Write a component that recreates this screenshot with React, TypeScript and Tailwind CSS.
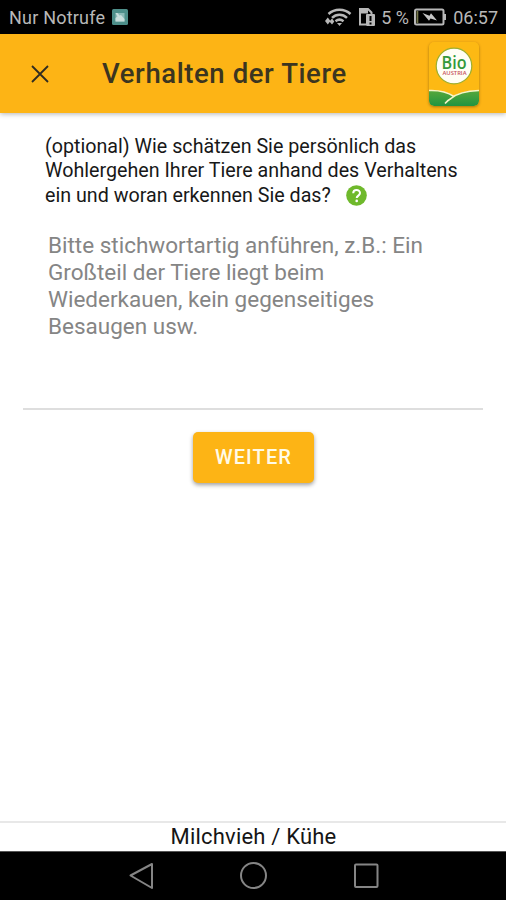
function StatusBar() {
  return (
    <div className="flex h-[34px] shrink-0 items-center bg-black pl-[9px] pr-[8px] text-[18px] leading-[34px] text-[#b8b8b8]">
      <span className="whitespace-nowrap pt-[2px] tracking-[0.2px]">Nur Notrufe</span>
      <svg className="ml-[7px] h-4 w-4" viewBox="0 0 16 16">
        <rect width="16" height="16" rx="1.5" fill="#4e8f8a" />
        <path d="M3.500 4h9v8.500h-9z" fill="#8dbab7" />
        <path d="M3.500 4h2l2 2.500L9 6l3.500 4v2.500h-9V9l2-1.500z" fill="#c8dddb" />
      </svg>
      <div className="ml-auto flex items-center">
        <svg className="h-[20px] w-[27px]" viewBox="0 0 27 20" fill="none" stroke="#b8b8b8" strokeWidth="2.500">
          <path d="M3.500 7C9.500 1.300 19.500 1.300 25.500 7" />
          <path d="M7 10.800c4.300-4 10.700-4 15 0" />
          <path d="M10.500 14.200c2.500-2 5.500-2 8 0" />
          <path d="M12 16h5l-2.500 3z" fill="#b8b8b8" stroke="none" />
          <path d="M0 14l2.800-3.500 2.700 3.500-2.700 3.500zM4.500 14.500l2.500-3 2.300 3-2.300 3z" fill="#b8b8b8" stroke="none" />
        </svg>
        <svg className="ml-[6px] mr-px h-[20px] w-[18px]" viewBox="0 0 18 20">
          <path d="M8 17.500H2V2h8l3.500 3.500V8" fill="none" stroke="#b8b8b8" strokeWidth="2" />
          <path d="M3 3h7v3.500H3z" fill="#b8b8b8" />
          <rect x="8" y="7" width="9" height="12" rx="1" fill="#b8b8b8" />
          <path d="M12.500 9v5M12.500 15.500v2" stroke="#000" strokeWidth="2" />
        </svg>
        <span className="ml-[4px] w-[30px] whitespace-nowrap pt-[2px]">5 %</span>
        <svg className="ml-[3px] h-[18px] w-[33px]" viewBox="0 0 33 18">
          <rect x="1" y="1.500" width="28.500" height="15" rx="1.500" fill="none" stroke="#b8b8b8" strokeWidth="2" />
          <path d="M2.500 3h1.800v12H2.500z" fill="#77794c" />
          <path d="M30 6h2v6h-2z" fill="#b8b8b8" />
          <path d="M8.500 5l7 2.800 1.500-2.500 6 7.200-6.500-2-1.500 2.300z" fill="#c6c6c6" />
        </svg>
        <span className="ml-[6px] whitespace-nowrap pt-[2px]">06:57</span>
      </div>
    </div>
  );
}

function Logo() {
  return (
    <svg className="h-[64px] w-[50px] rounded-[5px] shadow-[0_1px_3px_rgba(0,0,0,0.35)]" viewBox="0 0 50 64">
      <defs>
        <linearGradient id="field" x1="0" y1="0" x2="0" y2="1">
          <stop offset="0" stopColor="#57a83b" />
          <stop offset="1" stopColor="#209441" />
        </linearGradient>
      </defs>
      <rect width="50" height="64" rx="5" fill="#fdb913" />
      <path d="M0 48.500C11 48 19 50.500 25 54.500C31 50.500 40 48.500 50 48.500V59q0 5-5 5H5q-5 0-5-5z" fill="url(#field)" />
      <path d="M0 48.500C11 48 19 50.500 25 54.500M50 48.500C35 49 26 53 22 56.500Q19 58 16 61.500" fill="none" stroke="#f6f5c8" strokeWidth="1.600" />
      <circle cx="25" cy="24" r="17.800" fill="#fffef5" stroke="#9daf31" strokeWidth="1.200" />
      <text x="25" y="26.500" textAnchor="middle" textLength="25" lengthAdjust="spacingAndGlyphs" fontFamily="Open Sans, sans-serif" fontSize="17.500" fontWeight="600" fill="#35993a">Bio</text>
      <text x="25.500" y="32.800" textAnchor="middle" textLength="24" lengthAdjust="spacingAndGlyphs" fontFamily="Open Sans, sans-serif" fontSize="6" fontWeight="600" fill="#c5525e">AUSTRIA</text>
    </svg>
  );
}

export default function App() {
  return (
    <div className="flex h-[900px] w-[506px] flex-col overflow-hidden bg-white font-[Roboto,sans-serif]">
      <StatusBar />
      <header className="flex h-[79px] shrink-0 items-center bg-[#fdb415] shadow-[0_1px_5px_rgba(0,0,0,0.3)]">
        <svg className="ml-[31px] h-[18px] w-[18px]" viewBox="0 0 18 18" stroke="#302c20" strokeWidth="1.800">
          <path d="M1 1l16 16M17 1L1 17" />
        </svg>
        <h1 className="ml-[53px] whitespace-nowrap text-[27.500px] font-medium leading-8 tracking-[0.590px] text-[#3b3520]">Verhalten der Tiere</h1>
        <div className="ml-auto mr-[27px]">
          <Logo />
        </div>
      </header>
      <main className="flex grow flex-col">
        <div className="ml-[45px] mt-[22px] whitespace-nowrap text-[19.700px] leading-[24px] text-[#181818]">
          <p>(optional) Wie schätzen Sie persönlich das</p>
          <p>Wohlergehen Ihrer Tiere anhand des Verhaltens</p>
          <div className="flex h-[26px] items-center">
            <span>ein und woran erkennen Sie das?</span>
            <svg className="-mt-[2px] ml-[15px] h-[21px] w-[21px]" viewBox="0 0 21 21">
              <circle cx="10.500" cy="10.500" r="10.300" fill="#6fb92c" />
              <path d="M7.200 8.300C7.200 3.800 14 3.900 14 8.100c0 2.400-3.300 2.600-3.300 5" fill="none" stroke="#fff" strokeWidth="2" />
              <circle cx="10.700" cy="15.900" r="1.300" fill="#fff" />
            </svg>
          </div>
        </div>
        <div className="mx-[23px] mt-[23px] h-[178px] whitespace-nowrap border-b-2 border-[#dedede] pl-[25px] text-[22.500px] leading-[27px] text-[#858585]">
          <p>Bitte stichwortartig anführen, z.B.: Ein</p>
          <p>Großteil der Tiere liegt beim</p>
          <p>Wiederkauen, kein gegenseitiges</p>
          <p>Besaugen usw.</p>
        </div>
        <button className="ml-[193px] mt-[22px] h-[51px] w-[121px] rounded-[5px] bg-[#fdb415] pb-[2px] text-[20px] font-medium tracking-[1.100px] text-[#fffbe8] shadow-[0_2px_4px_rgba(0,0,0,0.38)]">WEITER</button>
      </main>
      <footer className="h-[30px] shrink-0 border-t-2 border-[#e8e8e8] pl-px text-center text-[22px] leading-[28px] tracking-[0.2px] text-[#151515]">Milchvieh / Kühe</footer>
      <nav className="h-[49px] shrink-0 border-t border-[#555] bg-black">
        <svg className="h-[48px] w-[506px]" viewBox="0 0 506 48" fill="none" stroke="#858585" strokeWidth="2" strokeLinejoin="round">
          <path d="M130.500 23.500L152 12v24z" />
          <circle cx="253.500" cy="23.500" r="12.500" />
          <rect x="355" y="12.500" width="22.500" height="22.500" rx="1" />
        </svg>
      </nav>
    </div>
  );
}
